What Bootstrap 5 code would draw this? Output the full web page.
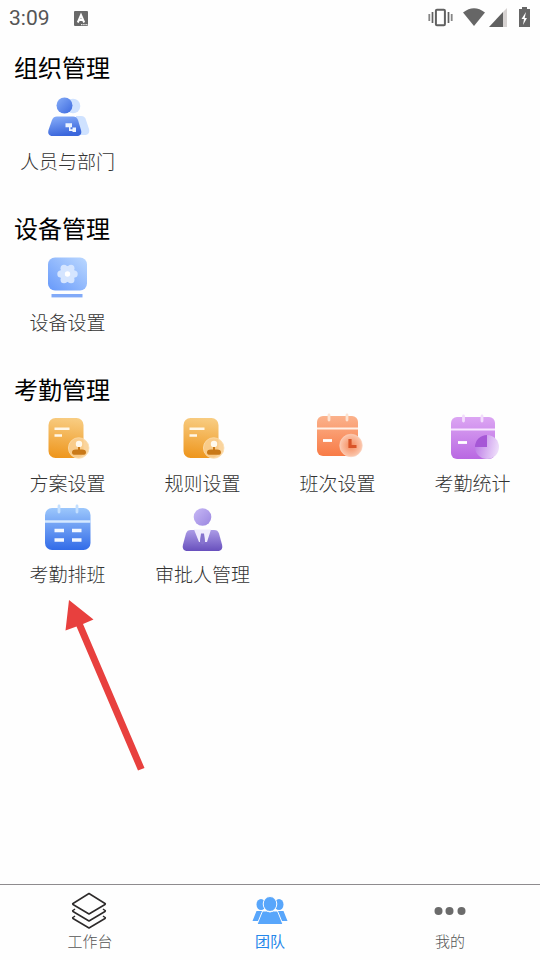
<!DOCTYPE html>
<html lang="zh-CN">
<head>
<meta charset="utf-8">
<meta name="viewport" content="width=device-width, initial-scale=1">
<title>团队</title>
<link href="https://cdn.jsdelivr.net/npm/bootstrap@5.3.0/dist/css/bootstrap.min.css" rel="stylesheet">
<style>
body { font-family: "Noto Sans CJK SC", sans-serif; background: #fefefe; color: #000; }
.status-bar { height: 36px; padding: 0 9px; color: #555; font: 21px/36px Roboto, sans-serif; }
.app-main { padding-top: 13px; }
.section-block { margin-bottom: 33px; }
.section-title { font-size: 24px; line-height: 36px; font-weight: 400; margin: 0 0 1px; padding-left: 14px; }
.app-item { position: relative; padding: 6px 0 2px; color: #333; font-size: 19px; line-height: 28px; font-weight: 300; }
.app-item svg.app-icon { width: 48px; height: 48px; margin-bottom: 7px; overflow: visible; }
.pointer-arrow { position: absolute; left: 64px; top: 100px; width: 84px; height: 174px; pointer-events: none; z-index: 2; }
.tab-bar { border-top: 1px solid #8e8b8e; background: #fefefe; height: 76px; }
.tab-item { padding-top: 6px; color: #555; font-size: 15px; line-height: 20px; font-weight: 300; }
.tab-item svg { width: 40px; height: 40px; }
.tab-item.active { color: #2587ea; font-weight: 400; }
</style>
<script src="https://cdn.jsdelivr.net/npm/bootstrap@5.3.0/dist/js/bootstrap.bundle.min.js"></script>
</head>
<body class="d-flex flex-column min-vh-100">
<svg width="0" height="0" class="position-absolute" aria-hidden="true">
  <defs>
    <linearGradient id="gBlue" x1="0" y1="0" x2="1" y2="1"><stop offset="0" stop-color="#86adf8"/><stop offset="1" stop-color="#3c69df"/></linearGradient>
    <linearGradient id="gBody" x1="0" y1="0" x2=".3" y2="1"><stop offset="0" stop-color="#8ab0fa"/><stop offset="1" stop-color="#3b67dc"/></linearGradient>
    <linearGradient id="gDevice" x1="0" y1="1" x2="1" y2="0"><stop offset="0" stop-color="#6799fa"/><stop offset="1" stop-color="#bbd8ff"/></linearGradient>
    <linearGradient id="gGold" x1=".5" y1="0" x2=".4" y2="1"><stop offset="0" stop-color="#f8cc81"/><stop offset="1" stop-color="#ee961d"/></linearGradient>
    <linearGradient id="gOrange" x1="0" y1="0" x2="0" y2="1"><stop offset="0" stop-color="#fbb28c"/><stop offset="1" stop-color="#f87b46"/></linearGradient>
    <linearGradient id="gPurple" x1="0" y1="0" x2="0" y2="1"><stop offset="0" stop-color="#dca6f3"/><stop offset="1" stop-color="#b968e2"/></linearGradient>
    <linearGradient id="gPie" x1="0" y1=".4" x2="1" y2=".6"><stop offset="0" stop-color="#bd7ce6"/><stop offset="1" stop-color="#efe0fb"/></linearGradient>
    <linearGradient id="gCal" x1="0" y1="0" x2="0" y2="1"><stop offset="0" stop-color="#9cc7fc"/><stop offset="1" stop-color="#326be8"/></linearGradient>
    <linearGradient id="gHead" x1="0" y1="0" x2="1" y2="1"><stop offset="0" stop-color="#c7b8f5"/><stop offset="1" stop-color="#9a86e0"/></linearGradient>
    <linearGradient id="gSuit" x1="0" y1="0" x2="0" y2="1"><stop offset="0" stop-color="#ab9be6"/><stop offset="1" stop-color="#6850bd"/></linearGradient>
    <radialGradient id="gClock"><stop offset="0" stop-color="#f58a5b"/><stop offset="1" stop-color="#fbc8af"/></radialGradient>
    <symbol id="plan" viewBox="0 0 48 48">
      <rect x="4.500" y="4" width="35" height="40" rx="7" fill="url(#gGold)"/>
      <path d="M10.500 14.700H25.500M10.500 21.500H18" stroke="#fff7e8" stroke-width="2.600"/>
      <circle cx="34.700" cy="34" r="10.300" fill="#f9cf92" fill-opacity=".9" stroke="#fbdeb0" stroke-width=".8"/>
      <circle cx="35" cy="30" r="3.200" fill="#fff9ed"/>
      <path d="M34 33h2v2.600h2c3 0 4 1.200 4 2.800s-1 2.300-3 2.300h-8c-2 0-3-.8-3-2.300s1-2.800 4-2.800h2z" fill="#c97918"/>
    </symbol>
  </defs>
</svg>

<header class="status-bar d-flex align-items-center justify-content-between">
  <div class="d-flex align-items-center">
    <span>3:09</span>
    <svg class="ms-4" width="14" height="15" viewBox="0 0 14 15" aria-hidden="true"><rect width="14" height="15" rx="1" fill="#696969"/><path d="M3.800 11.500L7 4 10.200 11.500M5 9h4" fill="none" stroke="#fff" stroke-width="2"/><path d="M7 13.700h7" stroke="#fff" stroke-width="1" stroke-dasharray="1.500 .7"/></svg>
  </div>
  <svg width="103" height="22" viewBox="428 7 103 22" aria-hidden="true">
    <rect x="435.900" y="9.700" width="9" height="15.600" rx="1" fill="none" stroke="#606060" stroke-width="2"/>
    <path d="M432.500 12v11M448.500 12v11" stroke="#606060" stroke-width="1.700"/><path d="M429.300 14v7M451.700 14v7" stroke="#858585" stroke-width="1.800"/>
    <path d="M463 12.500Q474 4 485 12.500L474 26Z" fill="#666"/>
    <path d="M489 27L503 12V27Z" fill="#606060"/><path d="M503 12L507 8V27H503Z" fill="#d6d2d1"/>
    <path d="M519 9h3V7h5v2h3v18h-11z" fill="#666"/><path d="M526 12l-4.500 7h2.500l-1 6 4-7h-2.300z" fill="#fff"/>
  </svg>
</header>

<main class="app-main flex-grow-1">
  <section class="section-block">
    <h2 class="section-title">组织管理</h2>
    <div class="row row-cols-4 g-0">
      <div class="col"><a href="#" class="app-item d-flex flex-column align-items-center text-decoration-none">
        <svg class="app-icon" viewBox="0 0 48 48" aria-hidden="true">
          <circle cx="29" cy="14" r="7.300" fill="#cfe2ff"/><path d="M32 24h5c3 0 4 1 5 4l3 9c1 4-1 6-5 6h-9z" fill="#cfe2ff"/>
          <circle cx="20.500" cy="13.500" r="8" fill="url(#gBlue)"/>
          <path d="M13 24.500h16c2.500 0 4 1 5 3.500l3 10c1 3.500-.5 6-4 6H8.500c-3.500 0-5-2.500-4-6l3.500-10c1-2.500 2.500-3.500 5-3.500z" fill="url(#gBody)"/>
          <path d="M21.500 31.200h6.500v4h-1.500v2h2v-1.700h3.500v4.500h-3.500v-1h-3.500v-3.800h-3.500z" fill="#edf4ff"/>
        </svg>人员与部门</a></div>
    </div>
  </section>

  <section class="section-block">
    <h2 class="section-title">设备管理</h2>
    <div class="row row-cols-4 g-0">
      <div class="col"><a href="#" class="app-item d-flex flex-column align-items-center text-decoration-none">
        <svg class="app-icon" viewBox="0 0 48 48" aria-hidden="true">
          <rect x="4" y="4.500" width="39" height="33" rx="7" fill="url(#gDevice)"/>
          <g fill="#d5e5ff"><circle cx="23.500" cy="21" r="7.900"/><circle cx="16.800" cy="21" r="3.500"/><circle cx="30.200" cy="21" r="3.500"/><circle cx="20" cy="15.200" r="3.500"/><circle cx="27" cy="15.200" r="3.500"/><circle cx="20" cy="26.800" r="3.500"/><circle cx="27" cy="26.800" r="3.500"/></g>
          <circle cx="23.500" cy="21" r="2.700" fill="#fff"/>
          <path d="M7.500 42.700h31" stroke="#82aaf8" stroke-width="3.400"/>
        </svg>设备设置</a></div>
    </div>
  </section>

  <section>
    <h2 class="section-title">考勤管理</h2>
    <div class="row row-cols-4 g-0">
      <div class="col"><a href="#" class="app-item d-flex flex-column align-items-center text-decoration-none"><svg class="app-icon" aria-hidden="true"><use href="#plan"/></svg>方案设置</a></div>
      <div class="col"><a href="#" class="app-item d-flex flex-column align-items-center text-decoration-none"><svg class="app-icon" aria-hidden="true"><use href="#plan"/></svg>规则设置</a></div>
      <div class="col"><a href="#" class="app-item d-flex flex-column align-items-center text-decoration-none">
        <svg class="app-icon" viewBox="0 0 48 48" aria-hidden="true">
          <rect x="3" y="2" width="41" height="40" rx="6" fill="url(#gOrange)"/>
          <path d="M3 14.500h41" stroke="#fff0e6" stroke-width="2.200"/><path d="M15 1v5M33 1v5" stroke="#fde2d0" stroke-width="2.800" stroke-linecap="round"/>
          <path d="M9 26.500h9" stroke="#fff" stroke-width="2.800"/>
          <circle cx="37" cy="31.500" r="11.300" fill="url(#gClock)" stroke="#fad2bd" stroke-width=".6"/>
          <path d="M36 25v7.500h6.500" fill="none" stroke="#d95529" stroke-width="3.200"/>
        </svg>班次设置</a></div>
      <div class="col"><a href="#" class="app-item d-flex flex-column align-items-center text-decoration-none">
        <svg class="app-icon" viewBox="0 0 48 48" aria-hidden="true">
          <rect x="2" y="3" width="44" height="42" rx="6" fill="url(#gPurple)"/>
          <path d="M2 15.500h44" stroke="#f7e6ff" stroke-width="2.200"/><path d="M14.500 2v5M33 2v5" stroke="#f2dcfc" stroke-width="2.800" stroke-linecap="round"/>
          <path d="M9 28.500h9" stroke="#fff" stroke-width="2.800"/>
          <circle cx="38" cy="33" r="12" fill="url(#gPie)"/><path d="M38 33V21a12 12 0 0 0-12 12z" fill="#a657d6"/>
        </svg>考勤统计</a></div>
      <div class="col"><a href="#" class="app-item d-flex flex-column align-items-center text-decoration-none">
        <svg class="app-icon" viewBox="0 0 48 48" aria-hidden="true">
          <rect x="1" y="3" width="45.500" height="42" rx="7" fill="url(#gCal)"/>
          <path d="M1 16.500h45.500" stroke="#d5e9ff" stroke-width="2.600"/><path d="M15 1v6M33 1v6" stroke="#c3dfff" stroke-width="2.800" stroke-linecap="round"/>
          <path d="M10.500 25.500H20M28 25.500h9.500M10.500 35H20M28 35h9.500" stroke="#f3f8ff" stroke-width="3.400"/>
        </svg>考勤排班
        <svg class="pointer-arrow" viewBox="0 0 84 174" aria-hidden="true"><path d="M5 1L29.500 20.500 19 25 80.500 169 74 171.500 12.500 27.500 1.500 31.500z" fill="#e8403e"/></svg></a></div>
      <div class="col"><a href="#" class="app-item d-flex flex-column align-items-center text-decoration-none">
        <svg class="app-icon" viewBox="0 0 48 48" aria-hidden="true">
          <circle cx="23.500" cy="12" r="8.800" fill="url(#gHead)"/>
          <path d="M12 25h23c3 0 4 1 5 3.500l3 11c1 4-.5 6.500-4.500 6.500h-30c-4 0-5.500-2.500-4.500-6.500l3-11c1-2.500 2-3.500 5-3.500z" fill="url(#gSuit)"/>
          <path d="M15 24.500h17L28 37h-2l-1-7h-3l-1 7h-1z" fill="#f0ecfd"/><path d="M22 28.500h3l1 9-2.500 2-2.500-2z" fill="#8673ce"/>
        </svg>审批人管理</a></div>
    </div>
  </section>
</main>

<nav class="tab-bar sticky-bottom" aria-label="主导航">
  <div class="row row-cols-3 g-0">
    <div class="col"><a href="#" class="tab-item d-flex flex-column align-items-center text-decoration-none">
      <svg viewBox="0 0 40 40" fill="none" stroke="#2d2a2a" stroke-width="1.500" stroke-linejoin="round" aria-hidden="true"><path d="M19 2.500L35 12.500Q35.800 13 35 13.500L19 23 3 13.500Q2.200 13 3 12.500ZM5 18l-2 1.500q-.8.500 0 1L19 30l16-9.500q.8-.500 0-1L33 18M5 25l-2 1.500q-.8.500 0 1L19 37l16-9.500q.8-.500 0-1L33 25"/></svg>工作台</a></div>
    <div class="col"><a href="#" class="tab-item active d-flex flex-column align-items-center text-decoration-none" aria-current="page">
      <svg viewBox="0 0 40 40" fill="#58a6fb" aria-hidden="true"><ellipse cx="11" cy="13.500" rx="4.500" ry="5.500"/><ellipse cx="29" cy="13.500" rx="4.500" ry="5.500"/><path d="M6.500 20h8l-5 10H2.500zM33.500 20h-8l5 10h7z"/><g stroke="#fefefe" stroke-width="1"><path d="M12.500 20h4Q20 22 23.500 20h4L33 33.500H7z"/><ellipse cx="20" cy="13" rx="6.800" ry="7.500"/></g></svg>团队</a></div>
    <div class="col"><a href="#" class="tab-item d-flex flex-column align-items-center text-decoration-none">
      <svg viewBox="0 0 40 40" fill="#6b6b6b" aria-hidden="true"><circle cx="8.500" cy="20" r="4"/><circle cx="19.500" cy="20" r="4"/><circle cx="31.500" cy="20" r="4"/></svg>我的</a></div>
  </div>
</nav>
</body>
</html>
